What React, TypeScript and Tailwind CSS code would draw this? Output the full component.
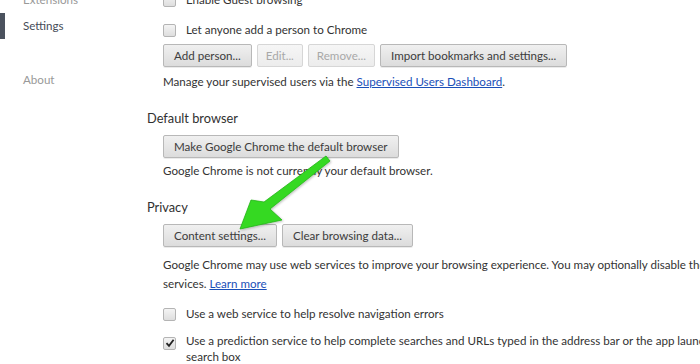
import React from "react";

const font = { fontFamily: 'Lato, "Noto Sans", Arial, sans-serif' };

const Checkbox = ({ checked = false }: { checked?: boolean }) => (
  <span className="relative inline-flex h-[13px] w-[13px] shrink-0 items-center justify-center rounded-[2px] border border-[#b4b4b4] bg-gradient-to-b from-[#f4f4f4] to-[#dedede]">
    {checked && (
      <svg width="10" height="10" viewBox="0 0 10 10">
        <path d="M1.5 5.2 L4 7.8 L8.6 1.8" stroke="#222" strokeWidth="1.8" fill="none" />
      </svg>
    )}
  </span>
);

const Button = ({ label, disabled = false }: { label: string; disabled?: boolean }) => (
  <button
    className={
      disabled
        ? "h-[23px] rounded-[2px] border border-[#d6d6d6] bg-gradient-to-b from-[#f6f6f6] to-[#ececec] px-[8px] text-[11.6px] text-[#a8a8a8]"
        : "h-[23px] rounded-[2px] border border-[#b8b8b8] bg-gradient-to-b from-[#f0f0f0] to-[#dcdcdc] px-[10px] text-[11.6px] text-[#3c3c3c] shadow-[0_1px_0_rgba(0,0,0,0.08)]"
    }
  >
    {label}
  </button>
);

const CheckRow = ({ label, checked }: { label: React.ReactNode; checked?: boolean }) => (
  <div className="flex items-start gap-[10px]">
    <div className="pt-[2px]">
      <Checkbox checked={checked} />
    </div>
    <div className="text-[11.6px] leading-[16px] text-[#333]">{label}</div>
  </div>
);

export default function App() {
  return (
    <div className="relative h-[364px] w-[700px] overflow-hidden bg-white" style={font}>
      <div className="flex">
        {/* sidebar */}
        <div className="w-[147px] shrink-0">
          <div className="-mt-[11px] flex h-[22px] items-center pl-[23px] text-[11.6px] text-[#999]">Extensions</div>
          <div className="relative mt-[2px] flex h-[26px] items-center pl-[23px] text-[11.6px] text-[#464c57]">
            <span className="absolute left-0 top-0 h-[26px] w-[5px] bg-[#4b525e]" />
            Settings
          </div>
          <div className="mt-[28px] flex h-[26px] items-center pl-[23px] text-[11.6px] text-[#999]">About</div>
        </div>

        {/* main */}
        <div className="flex-1 whitespace-nowrap text-[11.6px] text-[#333]">
          <div className="-mt-[8px] pl-[16px]">
            <CheckRow label="Enable Guest browsing" />
            <div className="mt-[11px]">
              <CheckRow label="Let anyone add a person to Chrome" />
            </div>
            <div className="mt-[2px] flex gap-[5px]">
              <Button label="Add person..." />
              <Button label="Edit..." disabled />
              <Button label="Remove..." disabled />
              <Button label="Import bookmarks and settings..." />
            </div>
            <div className="mt-[6px] leading-[18px]">
              Manage your supervised users via the{" "}
              <span className="text-[#1a4fb8] underline">Supervised Users Dashboard</span>.
            </div>
          </div>

          <div className="mt-[18px] text-[12.8px] leading-[18px] text-[#303030]">Default browser</div>
          <div className="pl-[16px]">
            <div className="mt-[8px] flex">
              <Button label="Make Google Chrome the default browser" />
            </div>
            <div className="mt-[4px] leading-[18px]">Google Chrome is not currently your default browser.</div>
          </div>

          <div className="mt-[18px] text-[12.8px] leading-[18px] text-[#303030]">Privacy</div>
          <div className="pl-[16px]">
            <div className="mt-[8px] flex gap-[5px]">
              <Button label="Content settings..." />
              <Button label="Clear browsing data..." />
            </div>
            <div className="mt-[8px] leading-[19px]">
              Google Chrome may use web services to improve your browsing experience. You may optionally disable these
              <br />
              services. <span className="text-[#1a4fb8] underline">Learn more</span>
            </div>
            <div className="mt-[13px]">
              <CheckRow label="Use a web service to help resolve navigation errors" />
            </div>
            <div className="mt-[8px]">
              <CheckRow
                checked
                label={
                  <>
                    Use a prediction service to help complete searches and URLs typed in the address bar or the app launcher
                    <br />
                    search box
                  </>
                }
              />
            </div>
          </div>
        </div>
      </div>

      {/* green arrow overlay */}
      <svg className="pointer-events-none absolute left-0 top-0" width="700" height="364">
        <defs>
          <filter id="sh" x="-20%" y="-20%" width="140%" height="140%">
            <feDropShadow dx="1" dy="1" stdDeviation="1" floodColor="#000" floodOpacity="0.25" />
          </filter>
        </defs>
        <polygon
          filter="url(#sh)"
          fill="#35d924"
          stroke="#22b514"
          strokeWidth="0.8"
          strokeLinejoin="round"
          points="330,161 326,156 264,202 251,200 240,229 282,220 270,209"
        />
      </svg>
    </div>
  );
}
